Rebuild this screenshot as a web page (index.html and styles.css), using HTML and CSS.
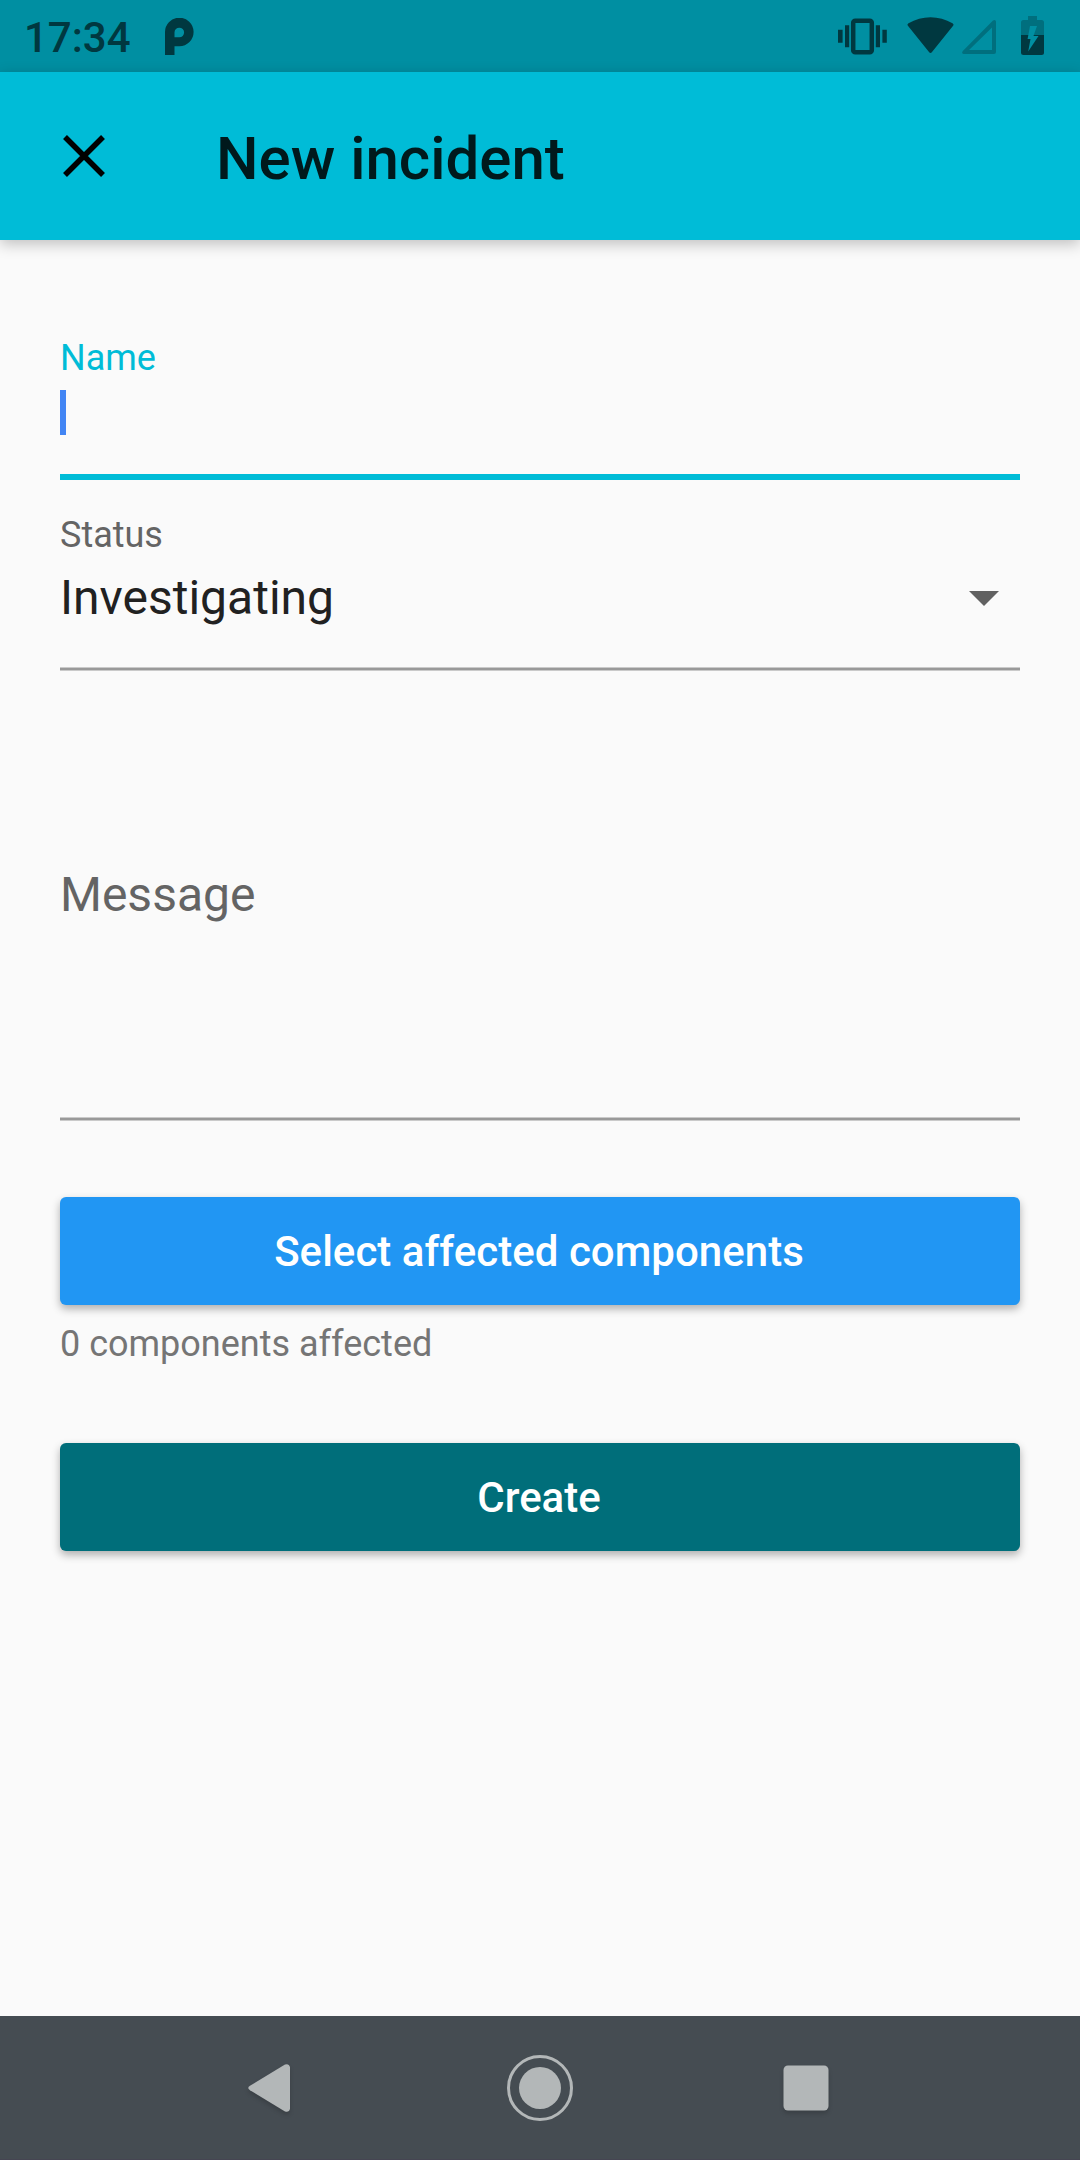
FILE: index.html
```html
<!DOCTYPE html>
<html lang="en">
<head>
<meta charset="utf-8">
<title>New incident</title>
<link rel="stylesheet" href="styles.css">
</head>
<body>
<div class="screen">
  <div class="status-bar">
    <span class="clock">17:34</span>
    <svg class="icon-p" width="30" height="38" viewBox="0 0 30 38"><path fill-rule="evenodd" d="M1 37V14.500A14.300 14.300 0 1 1 15.300 28.300H10.500V37ZM10.500 19.300H15.300A4.800 4.800 0 1 0 10.500 14.500Z"/></svg>
    <svg class="status-icons" width="210" height="44" viewBox="836 12 210 44">
      <rect x="853.200" y="20.800" width="18.600" height="31.400" rx="2" fill="none" stroke="#003840" stroke-width="4.500"/>
      <path d="M845 25.300h4.200v22h-4.200zM838 29.800h4.600v13h-4.600zM875.800 25.300h4.200v22h-4.200zM882.400 29.800h4.400v13h-4.400z"/>
      <path d="M907.700 25.600Q906.900 24.200 908.500 23.300C922 15.100 939 15.100 952.500 23.300Q954.100 24.200 953.300 25.600L932 52Q930.500 53.800 929 52Z"/>
      <path class="dim" fill-rule="evenodd" d="M996 21.500V52Q996 54 994 54H964Q961 53.500 962.800 51L993 20.600Q995.500 19 996 21.500ZM992 27.500L969 50H992Z"/>
      <path class="dim" d="M1028 16h9v4h4.500q2.500 0 2.500 2.500V35h-23V22.500q0-2.500 2.500-2.500h4.500z"/>
      <path d="M1021 35h23v17.500q0 2.500-2.500 2.500h-18q-2.500 0-2.500-2.500z"/>
      <path class="bolt" d="M1030 26H1037L1033.500 36H1038.500L1028.200 51.500L1030.500 39H1027.600Z"/>
    </svg>
  </div>
  <header class="app-bar">
    <svg class="close" width="44" height="44" viewBox="0 0 44 44"><path d="M3 3L41 41M41 3L3 41"/></svg>
    <h1 class="title">New incident</h1>
  </header>
  <main class="form">
    <div class="field field-name">
      <label class="label">Name</label>
      <div class="caret"></div>
    </div>
    <div class="field field-status">
      <label class="label">Status</label>
      <div class="select"><span>Investigating</span><svg width="30" height="15" viewBox="0 0 30 15"><path d="M0 0H30L15 15Z"/></svg></div>
      <div class="rule"></div>
    </div>
    <div class="field field-message">
      <span class="placeholder">Message</span>
      <div class="rule"></div>
    </div>
    <button class="button button-select">Select affected components</button>
    <p class="caption">0 components affected</p>
    <button class="button button-create">Create</button>
  </main>
  <nav class="nav-bar">
    <svg class="nav-icon back" width="42" height="48" viewBox="0 0 42 48"><path d="M2 21.800L37 .6Q41-1 42 3V45Q41 49 37 47.400L2 26.200Q-1.500 24 2 21.800Z"/></svg>
    <svg class="home" width="66" height="66" viewBox="0 0 66 66"><circle cx="33" cy="33" r="31.500" fill="none" stroke="#b3b7b8" stroke-width="3"/><circle cx="33" cy="33" r="21"/></svg>
    <svg class="nav-icon recent" width="46" height="46" viewBox="0 0 46 46"><rect x=".5" y=".5" width="45" height="45" rx="4.500"/></svg>
  </nav>
</div>
</body>
</html>
```
FILE: styles.css
```css
* { box-sizing: border-box; }
body { margin: 0; font-family: Roboto, "Liberation Sans", sans-serif; }
.screen { width: 1080px; height: 2160px; display: flex; flex-direction: column; background: #fafafa; overflow: hidden; }

.status-bar { height: 72px; flex: none; display: flex; align-items: flex-start; background: #008fa2; color: #003840; padding: 12px 34px 0 24px; }
.status-bar svg { fill: #003840; }
.clock { width: 140px; height: 52px; line-height: 52px; font-size: 42px; font-weight: 500; }
.icon-p { margin-top: 5.500px; }
.status-icons { margin-left: auto; }
.status-bar .dim { fill: #006f7e; }
.status-bar .bolt { fill: #008fa2; }

.app-bar { height: 168px; flex: none; display: flex; align-items: center; background: #00bcd7; padding: 0 62px; box-shadow: 0 4px 14px rgba(0, 0, 0, .24); }
.close { flex: none; margin-right: 110px; stroke: #000; stroke-width: 5.500; }
.title { margin: 5px 0 0; font-size: 60px; line-height: 72px; font-weight: 500; color: #00191c; white-space: nowrap; }

.form { flex: 1; display: flex; flex-direction: column; padding: 97px 60px 0; }
.label { display: block; height: 42px; line-height: 42px; font-size: 36px; color: #646464; }
.rule { height: 4px; background: #999; border: solid #cacaca; border-width: 1px 0; }
.field-name { height: 143px; border-bottom: 6px solid #00bcd7; }
.field-name .label { color: #00bcd7; }
.caret { width: 6px; height: 45px; margin-top: 11px; background: #4285f4; }
.field-status { height: 191px; padding-top: 34px; display: flex; flex-direction: column; }
.field-status .rule, .field-message .rule { margin-top: auto; }
.select { display: flex; align-items: center; justify-content: space-between; margin-top: 14px; padding-right: 21px; height: 56px; line-height: 56px; font-size: 48px; color: #212121; }
.select svg { fill: #616161; }
.field-message { height: 450px; padding-top: 196px; display: flex; flex-direction: column; }
.placeholder { font-size: 48px; line-height: 56px; color: #646464; }
.button { height: 108px; flex: none; border: 0; border-radius: 6px; padding: 2px 2px 0 0; font: 500 42px/50px Roboto, "Liberation Sans", sans-serif; color: #fff; box-shadow: 0 4px 8px rgba(0, 0, 0, .3); }
.button-select { margin-top: 76px; background: #2196f3; letter-spacing: 0.03px; }
.caption { margin: 18px 0 0; height: 42px; line-height: 42px; font-size: 36px; color: #757575; }
.button-create { margin-top: 78px; background: #006e7a; }

.nav-bar { height: 144px; flex: none; display: flex; align-items: center; background: #454c52; padding: 1px 251px 0 248px; border-bottom: 1px solid #454552; }
.nav-bar svg { fill: #b3b7b8; }
.nav-icon { overflow: visible; filter: drop-shadow(0 3px 2px rgba(0, 0, 0, .16)); }
.home { margin-left: 217px; }
.recent { margin-left: auto; }
```
